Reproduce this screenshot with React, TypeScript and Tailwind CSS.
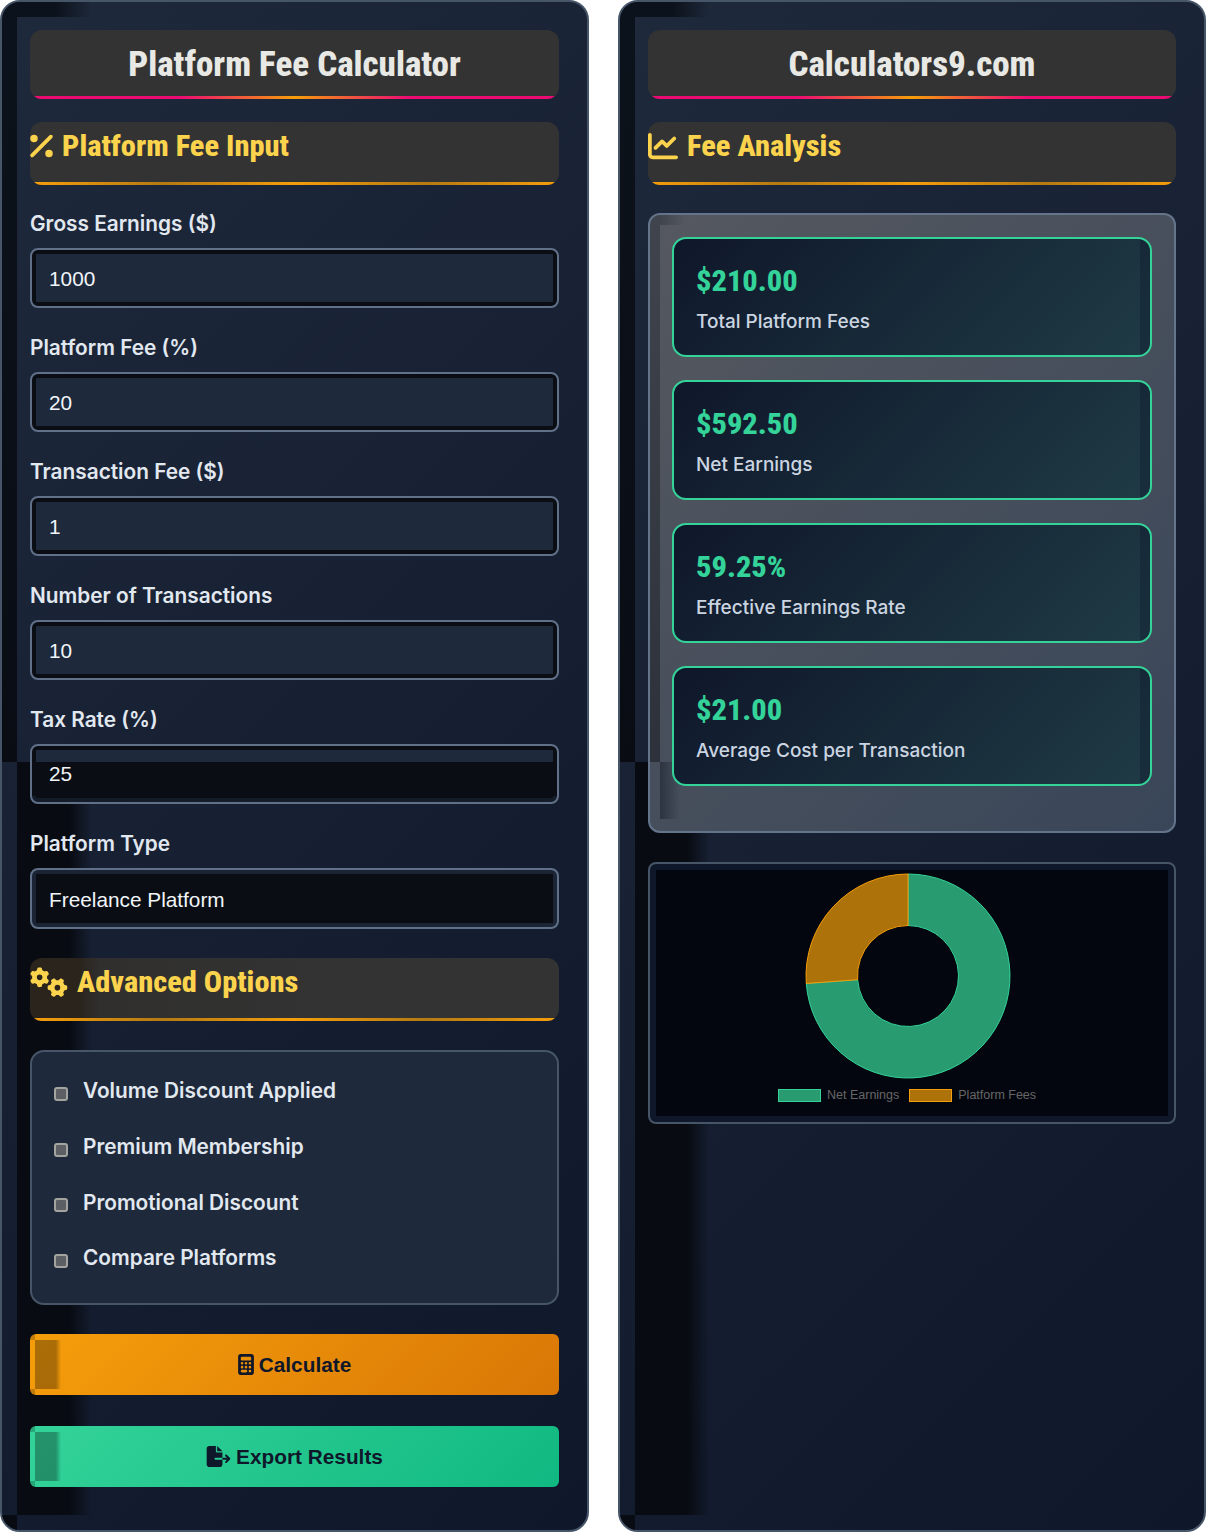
import React from "react";
import { FaPercent, FaChartLine, FaGears, FaCalculator, FaFileExport } from "react-icons/fa6";

const cond = "font-['Roboto_Condensed','Roboto',sans-serif] [font-stretch:75%] font-extrabold";
const inter = "font-['Inter',sans-serif]";
const arial = "font-['Liberation_Sans',Arial,sans-serif]";

function Artifacts() {
  return (
    <>
      <div className="absolute left-0 top-0 w-[15px] h-[760px] bg-[linear-gradient(180deg,#0c121b,#0b1018_50%,#090c13)]" />
      <div className="absolute left-[15px] top-0 w-[75px] h-[15px] bg-[linear-gradient(90deg,#0c121b,#0c121b_50%,transparent)]" />
      <div className="absolute left-[15px] top-[760px] bottom-[15px] w-[75px] bg-[linear-gradient(90deg,#080b12,#080b12_70%,transparent)]" />
      <div className="absolute left-0 bottom-0 w-[15px] h-[15px] bg-[#080b12]" />
    </>
  );
}

function Title({ children }: { children: React.ReactNode }) {
  return (
    <div className="relative h-[69px] mb-[23px] rounded-xl bg-[#333333] flex items-center justify-center overflow-hidden">
      <h1 className={`${cond} text-[35px] leading-none text-[#e8e8e4]`}>{children}</h1>
      <div className="absolute left-[2px] right-[2px] bottom-0 h-[3px] rounded-b-xl bg-[linear-gradient(90deg,#ec0b73,#ec0b73_28%,#f59e0b_50%,#ec0b73_72%,#ec0b73)]" />
    </div>
  );
}

function Section({ icon, children, shaded }: { icon: React.ReactNode; children: React.ReactNode; shaded?: boolean }) {
  return (
    <div className={`relative h-[63px] rounded-xl overflow-hidden ${shaded ? "bg-[linear-gradient(90deg,#2a241d,#2a241d_50px,#302f2e_70px,#333333_300px)]" : "bg-[#333333]"}`}>
      <h2 className={`${cond} text-[30.4px] leading-none text-[#fcd34d] flex items-center gap-[9px] h-[48px]`}>
        {icon}
        {children}
      </h2>
      <div className="absolute left-[2px] right-[2px] bottom-0 h-[3px] rounded-b-xl bg-[linear-gradient(90deg,#f59e0b,#b57a12_25%,#f59e0b_50%,#b57a12_75%,#f59e0b)]" />
    </div>
  );
}

function Field({ label, value, split }: { label: string; value: string; split?: boolean }) {
  return (
    <div className="mb-6">
      <label className={`${inter} block font-semibold text-[20.8px] leading-8 mb-2 text-[#e2e8f0]`}>{label}</label>
      <div className={`relative h-[60px] rounded-lg border-2 border-[#5f7088] ${split ? "bg-[linear-gradient(180deg,#0a0e14,#0a0e14_50px,#141c29_50px)]" : "bg-[#0a0e14]"} px-[4px] pt-[4px] pb-[4px]`}>
        <div className={`relative h-full ${split ? "bg-[linear-gradient(180deg,#1e293b_0,#1e293b_12px,#0a0e14_12px)]" : "bg-[#1e293b]"}`}>
          <input
            defaultValue={value}
            className={`${arial} w-full h-full bg-transparent pl-[13px] text-[20.8px] text-[#f1f5f9] outline-none ${split ? "" : "pt-[2px]"}`}
          />
        </div>
      </div>
    </div>
  );
}

function Check({ label }: { label: string }) {
  return (
    <label className={`${inter} flex items-center h-8 font-semibold text-[20.8px] text-[#e2e8f0]`}>
      <span className="ml-[22px] mr-[15px] mt-[6px] w-[14px] h-[14px] rounded-[3px] bg-[#5c5f63] border-2 border-[#a3a3a0] shrink-0" />
      {label}
    </label>
  );
}

function Button({ icon, children, cls }: { icon: React.ReactNode; children: React.ReactNode; cls: string }) {
  return (
    <button className={`${arial} relative w-full h-[61px] rounded-md font-bold text-[20.8px] text-[#0f172a] flex items-center justify-center gap-[5px] overflow-hidden ${cls}`}>
      <span className="absolute left-[5px] top-[6px] bottom-[6px] w-[26px] bg-[linear-gradient(90deg,rgba(0,0,0,0.3),rgba(0,0,0,0.3)_80%,transparent)]" />
      <span className="absolute left-0 top-0 w-[5px] h-[6px] bg-[rgba(0,0,0,0.2)]" />
      <span className="absolute left-0 bottom-0 w-[5px] h-[6px] bg-[rgba(0,0,0,0.2)]" />
      {icon}
      <span>{children}</span>
    </button>
  );
}

function Card({ value, label }: { value: string; label: string }) {
  return (
    <div className="relative h-[120px] rounded-[14px] border-2 border-[#34d399] bg-[linear-gradient(135deg,#0f172a,#1f3b45)] pl-[22px] pt-[23px] overflow-hidden">
      <div className={`${cond} text-[30.4px] leading-[38px] text-[#34d399]`}>{value}</div>
      <div className={`${inter} font-medium text-[19px] leading-[30px] mt-[7px] text-[#cbd5e1]`}>{label}</div>
      <div className="absolute right-0 top-0 bottom-0 w-[10px] bg-[rgba(15,23,42,0.35)]" />
    </div>
  );
}

function arc(a0: number, a1: number, R: number, r: number, cx: number, cy: number) {
  const p = (a: number, q: number) => [cx + q * Math.sin(a), cy - q * Math.cos(a)].map((n) => n.toFixed(2)).join(" ");
  const large = a1 - a0 > Math.PI ? 1 : 0;
  return `M${p(a0, R)}A${R} ${R} 0 ${large} 1 ${p(a1, R)}L${p(a1, r)}A${r} ${r} 0 ${large} 0 ${p(a0, r)}Z`;
}

function Donut() {
  const split = 2 * Math.PI * (592.5 / 802.5);
  return (
    <svg width="512" height="246" viewBox="0 0 512 246" className="block">
      <path d={arc(0, split, 102, 50.5, 252, 106)} fill="#299b70" stroke="#34d399" strokeWidth="1" />
      <path d={arc(split, 2 * Math.PI, 102, 50.5, 252, 106)} fill="#ad720a" stroke="#f59e0b" strokeWidth="1" />
    </svg>
  );
}

export default function App() {
  return (
    <div className="grid grid-cols-[589px_588px] gap-[29px] bg-white w-[1206px] h-[1533px] items-start">
      <div className="relative h-[1532px] rounded-[20px] border-2 border-[#475569] bg-[linear-gradient(135deg,#1e293b,#0f172a)] overflow-hidden px-[28px] pt-[28px]">
        <Artifacts />
        <div className="relative">
          <Title>Platform Fee Calculator</Title>
          <div className="mb-[23px]">
            <Section icon={<FaPercent className="w-[23px] h-[30px] shrink-0" />}>Platform Fee Input</Section>
          </div>
          <Field label="Gross Earnings ($)" value="1000" />
          <Field label="Platform Fee (%)" value="20" />
          <Field label="Transaction Fee ($)" value="1" />
          <Field label="Number of Transactions" value="10" />
          <Field label="Tax Rate (%)" value="25" split />
          <div className="mb-[29px]">
            <label className={`${inter} block font-semibold text-[20.8px] leading-8 mb-2 text-[#e2e8f0]`}>Platform Type</label>
            <div className="h-[61px] rounded-lg border-2 border-[#5f7088] bg-[#1a2434] p-[4px]">
              <div className="h-full bg-[#0a0e14] flex items-center pl-[13px] pt-[2px]">
                <span className={`${arial} text-[20.8px] text-[#f1f5f9]`}>Freelance Platform</span>
              </div>
            </div>
          </div>
          <div className="mb-[29px]">
            <Section shaded icon={<FaGears className="w-[38px] h-[30px] shrink-0" />}>Advanced Options</Section>
          </div>
          <div className="h-[255px] mb-[29px] rounded-[14px] border-2 border-[#475569] bg-[#1e293b] pt-[23px] flex flex-col gap-[23.7px]">
            <Check label="Volume Discount Applied" />
            <Check label="Premium Membership" />
            <Check label="Promotional Discount" />
            <Check label="Compare Platforms" />
          </div>
          <div className="mb-[31px]">
            <Button cls="bg-[linear-gradient(135deg,#f59e0b,#d97706)]" icon={<FaCalculator className="w-[16px] h-[21px] shrink-0" />}>Calculate</Button>
          </div>
          <Button cls="bg-[linear-gradient(135deg,#34d399,#10b981)]" icon={<FaFileExport className="w-[25px] h-[21px] shrink-0" />}>Export Results</Button>
        </div>
      </div>

      <div className="relative h-[1532px] rounded-[20px] border-2 border-[#475569] bg-[linear-gradient(135deg,#1e293b,#0f172a)] overflow-hidden px-[28px] pt-[28px]">
        <Artifacts />
        <div className="relative">
          <Title>Calculators9.com</Title>
          <div className="mb-[28px]">
            <Section icon={<FaChartLine className="w-[30px] h-[30px] shrink-0" />}>Fee Analysis</Section>
          </div>
          <div className="relative h-[620px] mb-[29px] rounded-xl border-2 border-[#64748b] bg-[linear-gradient(135deg,#55585f,#394659)] px-[22px] pt-[22px] overflow-hidden">
            <div className="absolute left-0 top-0 w-[10px] h-[547px] bg-[linear-gradient(180deg,#3f444d,#2c313a)]" />
            <div className="absolute left-[10px] top-0 w-[25px] h-[10px] bg-[linear-gradient(90deg,#3f444d,transparent)]" />
            <div className="absolute left-[10px] top-[547px] h-[57px] w-[20px] bg-[linear-gradient(90deg,#2c3440,transparent)]" />
            <div className="relative flex flex-col gap-[23px]">
              <Card value="$210.00" label="Total Platform Fees" />
              <Card value="$592.50" label="Net Earnings" />
              <Card value="59.25%" label="Effective Earnings Rate" />
              <Card value="$21.00" label="Average Cost per Transaction" />
            </div>
          </div>
          <div className="relative h-[262px] rounded-lg border-2 border-[#475569] bg-[#0f172a] p-[6px]">
            <div className="h-full bg-[#03060e] relative">
              <Donut />
              <div className={`${arial} absolute left-[122px] top-[218px] flex items-center text-[12.5px] leading-[14px] text-[#666666]`}>
                <span className="w-[43px] h-[13px] bg-[#299b70] border border-[#34d399]" />
                <span className="ml-[6px] mr-[10px]">Net Earnings</span>
                <span className="w-[43px] h-[13px] bg-[#ad720a] border border-[#f59e0b]" />
                <span className="ml-[6px]">Platform Fees</span>
              </div>
            </div>
          </div>
        </div>
      </div>
    </div>
  );
}
